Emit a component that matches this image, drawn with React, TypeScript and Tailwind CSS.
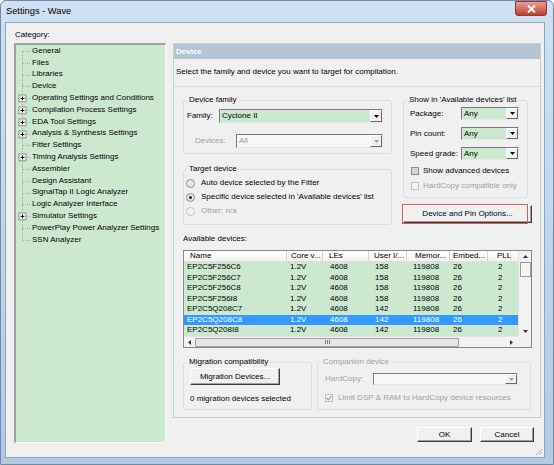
import React from 'react';

type TreeItem = { label: string; expandable?: boolean };

const treeItems: TreeItem[] = [
  { label: 'General' },
  { label: 'Files' },
  { label: 'Libraries' },
  { label: 'Device' },
  { label: 'Operating Settings and Conditions', expandable: true },
  { label: 'Compilation Process Settings', expandable: true },
  { label: 'EDA Tool Settings', expandable: true },
  { label: 'Analysis & Synthesis Settings', expandable: true },
  { label: 'Fitter Settings' },
  { label: 'Timing Analysis Settings', expandable: true },
  { label: 'Assembler' },
  { label: 'Design Assistant' },
  { label: 'SignalTap II Logic Analyzer' },
  { label: 'Logic Analyzer Interface' },
  { label: 'Simulator Settings', expandable: true },
  { label: 'PowerPlay Power Analyzer Settings' },
  { label: 'SSN Analyzer' },
];

const columns = [
  { title: 'Name', w: 'w-[103px]', hp: 'pl-[6px]', cp: 'pl-[3px]' },
  { title: 'Core v...', w: 'w-[36px]', hp: 'pl-[4px]', cp: 'pl-[3px]' },
  { title: 'LEs', w: 'w-[46px]', hp: 'pl-[6px]', cp: 'pl-[7px]' },
  { title: 'User I/...', w: 'w-[38px]', hp: 'pl-[5px]', cp: 'pl-[6px]' },
  { title: 'Memor...', w: 'w-[43px]', hp: 'pl-[8px]', cp: 'pl-[6px]' },
  { title: 'Embed...', w: 'w-[38px]', hp: 'pl-[3px]', cp: 'pl-[3px]' },
  { title: 'PLL', w: 'w-[30px]', hp: 'pl-[9px]', cp: 'pl-[10px]' },
];

const devices = [
  ['EP2C5F256C6', '1.2V', '4608', '158', '119808', '26', '2'],
  ['EP2C5F256C7', '1.2V', '4608', '158', '119808', '26', '2'],
  ['EP2C5F256C8', '1.2V', '4608', '158', '119808', '26', '2'],
  ['EP2C5F256I8', '1.2V', '4608', '158', '119808', '26', '2'],
  ['EP2C5Q208C7', '1.2V', '4608', '142', '119808', '26', '2'],
  ['EP2C5Q208C8', '1.2V', '4608', '142', '119808', '26', '2'],
  ['EP2C5Q208I8', '1.2V', '4608', '142', '119808', '26', '2'],
];
const selectedRow = 5;

function TreeLines({ first, last, expandable }: { first: boolean; last: boolean; expandable?: boolean }) {
  return (
    <svg className="w-[16px] h-[11.8px] shrink-0" viewBox="0 0 16 12" preserveAspectRatio="none">
      <line x1="6.5" y1={first ? 6 : 0} x2="6.5" y2={last ? 6 : 12} stroke="#a8a8a8" strokeDasharray="1 1" />
      <line x1="7" y1="6.5" x2="15" y2="6.5" stroke="#a8a8a8" strokeDasharray="1 1" />
      {expandable && (
        <>
          <rect x="3" y="3" width="7" height="7" fill="#f8f8f8" stroke="#8c8c8c" />
          <line x1="4.5" y1="6.5" x2="8.5" y2="6.5" stroke="#000" />
          <line x1="6.5" y1="4.5" x2="6.5" y2="8.5" stroke="#000" />
        </>
      )}
    </svg>
  );
}

function DropButton({ disabled }: { disabled?: boolean }) {
  return (
    <div className="w-[12px] shrink-0 bg-[#f0f0f0] border border-t-white border-l-white border-b-[#6a6a6a] border-r-[#6a6a6a] flex items-center justify-center">
      <svg width="5" height="3" viewBox="0 0 5 3">
        <path d="M0 0h5L2.5 3z" fill={disabled ? '#a0a0a0' : '#000'} />
      </svg>
    </div>
  );
}

function Combo({ value, className, disabled }: { value: string; className: string; disabled?: boolean }) {
  return (
    <div
      className={`flex border border-t-[#7a7a7a] border-l-[#7a7a7a] border-b-[#e6e6e6] border-r-[#e6e6e6] ${
        disabled ? 'bg-[#f7f7f7]' : 'bg-[#cce8cf]'
      } ${className}`}
    >
      <div className={`flex-1 flex items-center pl-[2px] ${disabled ? 'text-[#a0a0a0]' : ''}`}>{value}</div>
      <DropButton disabled={disabled} />
    </div>
  );
}

function Radio({ checked, disabled }: { checked?: boolean; disabled?: boolean }) {
  return (
    <span
      className={`w-[9px] h-[9px] shrink-0 rounded-full border flex items-center justify-center ${
        disabled ? 'border-[#c4c4c4] bg-[#f4f4f4]' : 'border-[#8a8a8a] bg-[#e9e9e9]'
      }`}
    >
      {checked && <span className="w-[3px] h-[3px] rounded-full bg-[#1a1a1a]" />}
    </span>
  );
}

function Check({ checked, disabled }: { checked?: boolean; disabled?: boolean }) {
  return (
    <span
      className={`w-[8px] h-[8px] shrink-0 border flex items-center justify-center ${
        disabled ? 'border-[#c0c0c0] bg-[#f4f4f4]' : 'border-[#8a8a8a] bg-[#d6d6d6]'
      }`}
    >
      {checked && (
        <svg width="6" height="6" viewBox="0 0 6 6">
          <path d="M0.5 3l1.8 1.8L5.5 1" fill="none" stroke="#a0a0a0" strokeWidth="1.2" />
        </svg>
      )}
    </span>
  );
}

function Btn({ children, className }: { children: React.ReactNode; className: string }) {
  return (
    <button
      type="button"
      className={`flex items-center justify-center bg-[#f0f0f0] border border-t-white border-l-white border-b-[#3c3c3c] border-r-[#3c3c3c] shadow-[inset_-1px_-1px_0_#a0a0a0] ${className}`}
    >
      {children}
    </button>
  );
}

function Group({ title, className, disabled, children }: { title: string; className: string; disabled?: boolean; children: React.ReactNode }) {
  return (
    <fieldset className={`border border-[#d5dfe5] rounded-[3px] ${className}`}>
      <legend className={`ml-[3px] px-[2px] leading-[10px] ${disabled ? 'text-[#a0a0a0]' : ''}`}>{title}</legend>
      {children}
    </fieldset>
  );
}

function VScroll() {
  return (
    <div className="w-[13px] h-[85px] bg-[#f2f2f2] border-l border-[#e2e2e2] flex flex-col items-center">
      <div className="h-[10px] flex items-center justify-center">
        <svg width="5" height="3" viewBox="0 0 5 3">
          <path d="M0 3h5L2.5 0z" fill="#333" />
        </svg>
      </div>
      <div className="mt-[1px] w-[11px] h-[15px] bg-[#f4f4f4] border border-[#9a9a9a] shadow-[inset_1px_1px_0_#fff]" />
      <div className="flex-1" />
      <div className="h-[10px] flex items-center justify-center">
        <svg width="5" height="3" viewBox="0 0 5 3">
          <path d="M0 0h5L2.5 3z" fill="#333" />
        </svg>
      </div>
    </div>
  );
}

function HScroll() {
  return (
    <div className="w-[334px] h-[11px] bg-[#f2f2f2] border-t border-[#e2e2e2] flex items-center">
      <div className="w-[11px] flex justify-center">
        <svg width="3" height="5" viewBox="0 0 3 5">
          <path d="M3 0v5L0 2.5z" fill="#333" />
        </svg>
      </div>
      <div className="w-[264px] h-[9px] bg-[#e6e6e6] border border-[#a0a0a0] rounded-[1px] flex items-center justify-center">
        <span className="flex gap-[1px]">
          <span className="w-px h-[4px] bg-[#7a7a7a]" />
          <span className="w-px h-[4px] bg-[#7a7a7a]" />
          <span className="w-px h-[4px] bg-[#7a7a7a]" />
        </span>
      </div>
      <div className="flex-1" />
      <div className="w-[14px] flex justify-center">
        <svg width="3" height="5" viewBox="0 0 3 5">
          <path d="M0 0v5L3 2.5z" fill="#333" />
        </svg>
      </div>
    </div>
  );
}

export default function App() {
  return (
    <div className="w-[554px] h-[465px] flex flex-col overflow-hidden rounded-t-[6px] border border-[#6f89a8] bg-gradient-to-b from-[#cfe1f3] to-[#b2cae4] font-['Liberation_Sans',Arial,sans-serif] text-[8px] leading-[10px] text-black">
      {/* title bar */}
      <div className="h-[21px] flex justify-between">
        <div className="pl-[5px] pt-[5px] text-[9.3px] leading-[11px]">Settings - Wave</div>
        <div className="mr-[6px] w-[32px] h-[15px] rounded-b-[3px] border border-[#8a3a3a] bg-gradient-to-b from-[#e8a093] to-[#c0392b] flex items-center justify-center">
          <svg width="9" height="8" viewBox="0 0 9 8">
            <path d="M1 0.5l7 7M8 0.5l-7 7" stroke="#fff" strokeWidth="1.8" />
          </svg>
        </div>
      </div>

      {/* client area */}
      <div className="relative ml-[4px] mr-[8px] h-[436px] bg-[#f0f0f0] border border-[#8fa5bf] flex">
        {/* category tree */}
        <div className="pl-[8px] pt-[7px] flex flex-col">
          <div className="pl-[1px]">Category:</div>
          <div className="mt-[3px] w-[152px] h-[400px] bg-[#cce8cf] border-l-2 border-t-2 border-r border-b border-l-[#a0a0a0] border-t-[#a0a0a0] border-r-[#fafafa] border-b-[#fafafa]">
            {treeItems.map((item, i) => (
              <div key={item.label} className="h-[11.8px] flex items-center whitespace-nowrap">
                <TreeLines first={i === 0} last={i === treeItems.length - 1} expandable={item.expandable} />
                <span>{item.label}</span>
              </div>
            ))}
          </div>
        </div>

        {/* right side */}
        <div className="ml-[7px] mt-[20px] w-[368px] flex flex-col">
          <div className="h-[375px] border border-[#c5ced8] flex flex-col">
            <div className="h-[15px] bg-[#b6c5d4] text-white font-bold pl-[2px] flex items-center">Device</div>
            <div className="mt-[8px] pl-[2px]">Select the family and device you want to target for compilation.</div>
            <div className="mt-[9px] h-px bg-[#dcdcdc]" />

            <div className="mt-[8px] pl-[9px] flex gap-[11px]">
              <div className="w-[209px] flex flex-col gap-[10px]">
                <Group title="Device family" className="w-[209px] pt-[4px] pb-[5px]">
                  <div className="h-[14px] flex pl-[3px]">
                    <span className="w-[32px] self-center">Family:</span>
                    <Combo value="Cyclone II" className="w-[164px]" />
                  </div>
                  <div className="mt-[11px] h-[14px] flex pl-[11px]">
                    <span className="w-[41px] self-center text-[#a0a0a0]">Devices:</span>
                    <Combo value="All" className="w-[147px]" disabled />
                  </div>
                </Group>
                <Group title="Target device" className="w-[209px] pt-[2px] pb-[6px]">
                  {[
                    { label: 'Auto device selected by the Fitter' },
                    { label: "Specific device selected in 'Available devices' list", checked: true },
                    { label: 'Other:  n/a', disabled: true },
                  ].map((r) => (
                    <div key={r.label} className="h-[14px] flex items-center gap-[6px] pl-[2px]">
                      <Radio checked={r.checked} disabled={r.disabled} />
                      <span className={r.disabled ? 'text-[#a0a0a0]' : ''}>{r.label}</span>
                    </div>
                  ))}
                </Group>
              </div>

              <div className="w-[129px] flex flex-col">
                <Group title="Show in 'Available devices' list" className="w-[125px] pt-[2px] pb-[5px]">
                  {['Package:', 'Pin count:', 'Speed grade:'].map((label, i) => (
                    <div key={label} className={`h-[13px] flex pl-[6px] ${i > 0 ? 'mt-[7px]' : ''}`}>
                      <span className="w-[51px] self-center">{label}</span>
                      <Combo value="Any" className="w-[58px]" />
                    </div>
                  ))}
                  <div className="mt-[5px] h-[12px] flex items-center gap-[4px] pl-[7px]">
                    <Check />
                    <span>Show advanced devices</span>
                  </div>
                  <div className="mt-[3px] h-[12px] flex items-center gap-[4px] pl-[7px]">
                    <Check disabled />
                    <span className="text-[#a0a0a0]">HardCopy compatible only</span>
                  </div>
                </Group>
                <div className="relative mt-[6px] h-[20px] w-[129px] flex items-center">
                  <Btn className="w-[129px] h-[18px]">Device and Pin Options...</Btn>
                  <div className="absolute left-[-1px] top-0 w-[126px] h-[20px] border border-[#e0585a]" />
                </div>
              </div>
            </div>

            <div className="mt-[9px] pl-[9px]">Available devices:</div>

            <div className="mt-[6px] ml-[9px] w-[349px] h-[98px] border border-[#828790] flex flex-col bg-[#cce8cf]">
              <div className="flex h-[85px]">
                <div className="w-[334px] flex flex-col overflow-hidden">
                  <div className="h-[11px] flex bg-gradient-to-b from-white to-[#f3f3f3] border-b border-[#e0e0e0]">
                    {columns.map((c, i) => (
                      <div
                        key={c.title}
                        className={`${c.w} ${c.hp} shrink-0 flex items-center whitespace-nowrap overflow-hidden ${
                          i < columns.length - 1 ? 'border-r border-[#d5d5d5]' : ''
                        }`}
                      >
                        {c.title}
                      </div>
                    ))}
                  </div>
                  {devices.map((row, r) => (
                    <div
                      key={row[0]}
                      className={`h-[10.5px] shrink-0 flex ${r === selectedRow ? 'bg-[#3399ff] text-white' : ''}`}
                    >
                      {row.map((cell, i) => (
                        <div key={i} className={`${columns[i].w} ${columns[i].cp} shrink-0 flex items-center whitespace-nowrap`}>
                          {cell}
                        </div>
                      ))}
                    </div>
                  ))}
                </div>
                <VScroll />
              </div>
              <div className="flex h-[11px]">
                <HScroll />
                <div className="w-[13px] bg-[#f0f0f0]" />
              </div>
            </div>

            <div className="mt-[9px] ml-[9px] flex gap-[5px]">
              <Group title="Migration compatibility" className="w-[129px] pt-[1px] pb-[5px]">
                <Btn className="ml-[6px] w-[90px] h-[17px]">Migration Devices...</Btn>
                <div className="mt-[9px] pl-[6px] whitespace-nowrap">0 migration devices selected</div>
              </Group>
              <Group title="Companion device" className="w-[214px] pt-[6px] pb-[6px]" disabled>
                <div className="h-[12px] flex pl-[7px]">
                  <span className="w-[48px] self-center text-[#a0a0a0]">HardCopy:</span>
                  <Combo value="" className="w-[145px]" disabled />
                </div>
                <div className="mt-[8px] h-[10px] flex items-center gap-[5px] pl-[7px]">
                  <Check checked disabled />
                  <span className="text-[#a0a0a0] whitespace-nowrap">Limit DSP &amp; RAM to HardCopy device resources</span>
                </div>
              </Group>
            </div>
          </div>

          <div className="mt-[9px] pr-[7px] flex justify-end gap-[8px]">
            <Btn className="w-[55px] h-[15px]">OK</Btn>
            <Btn className="w-[54px] h-[15px]">Cancel</Btn>
          </div>
        </div>

        {/* resize grip */}
        <svg className="absolute right-[1px] bottom-[1px]" width="8" height="8" viewBox="0 0 8 8">
          <path d="M7 1L1 7M7 4L4 7" stroke="#a8b8c8" strokeWidth="1" />
        </svg>
      </div>
    </div>
  );
}
